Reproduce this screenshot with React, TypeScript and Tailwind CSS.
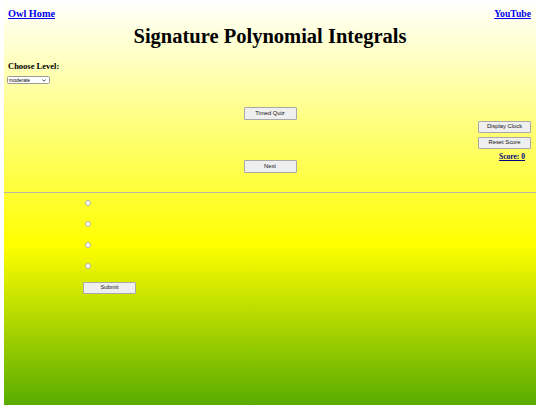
import React from "react";

const serif = { fontFamily: '"Liberation Serif", "Times New Roman", serif' };

function Btn({ label, className = "" }: { label: string; className?: string }) {
  return (
    <button
      type="button"
      className={
        "flex items-center justify-center w-[53px] bg-[#efefef] border border-[#a9a9a9] rounded-[1px] text-[5.8px] leading-none text-[#111] font-['Liberation_Sans',Arial,sans-serif] " +
        className
      }
    >
      {label}
    </button>
  );
}

function Radio() {
  return <span className="block w-[6px] h-[6px] rounded-full bg-white border border-[#b0b0b0]" />;
}

export default function App() {
  return (
    <div className="w-[540px] h-[405px] overflow-hidden bg-white">
      <div
        className="mx-[4px] h-[405px] flex flex-col bg-[linear-gradient(180deg,#ffffff_0px,#ffff00_245px,#008000_490px)] text-black"
        style={serif}
      >
        <div className="flex justify-between items-start pl-[4px] pr-[5px] pt-[8px] h-[20px] leading-[12px] font-bold">
          <a href="#" className="text-[10.25px] text-[#0000ee] underline">Owl Home</a>
          <a href="#" className="text-[9.7px] text-[#0000ee] underline">YouTube</a>
        </div>
        <h1 className="mt-[4px] text-center text-[20.5px] leading-[24px] font-bold">
          Signature Polynomial Integrals
        </h1>
        <div className="mt-[13px] pl-[4px] text-[8.5px] leading-[10px] font-bold">Choose Level:</div>
        <div className="mt-[5px] ml-[3px] w-[43px] h-[8px] flex items-center justify-between bg-white border border-[#9a9a9a] rounded-[1.5px] pl-[1px] pr-[3px] text-[5px] leading-none font-['Liberation_Sans',Arial,sans-serif]">
          <span>moderate</span>
          <svg width="4" height="3" viewBox="0 0 4 3">
            <path d="M0.4 0.5 L2 2.2 L3.6 0.5" fill="none" stroke="#222" strokeWidth="0.8" />
          </svg>
        </div>
        <div className="grid grid-cols-[1fr_53px_1fr]">
          <div />
          <div className="flex flex-col pt-[23px] pb-[19px]">
            <Btn label="Timed Quiz" className="h-[13px]" />
            <Btn label="Next" className="h-[13px] mt-[40px]" />
          </div>
          <div className="flex flex-col items-end pr-[5px] pt-[37px]">
            <Btn label="Display Clock" className="h-[12px]" />
            <Btn label="Reset Score" className="h-[12px] mt-[4px]" />
            <div className="mt-[3px] mr-[6px] text-[7.5px] leading-[9px] font-bold underline text-[#000080]">
              Score: 0
            </div>
          </div>
        </div>
        <div className="h-px bg-[#b8b8a8]" />
        <div className="pl-[79px] pt-[7px] flex flex-col items-start">
          <div className="ml-[2px] flex flex-col gap-[15px]">
            <Radio />
            <Radio />
            <Radio />
            <Radio />
          </div>
          <Btn label="Submit" className="h-[12px] mt-[13px]" />
        </div>
      </div>
    </div>
  );
}
